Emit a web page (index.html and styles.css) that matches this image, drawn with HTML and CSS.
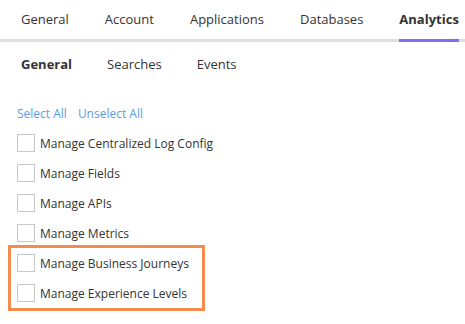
FILE: index.html
```html
<!DOCTYPE html>
<html lang="en">
<head>
  <meta charset="UTF-8">
  <title>Permissions</title>
  <link rel="stylesheet" href="styles.css">
</head>
<body>
  <!-- Top tabs -->
  <div class="tabs">
    <div class="tab">General</div>
    <div class="tab">Account</div>
    <div class="tab">Applications</div>
    <div class="tab">Databases</div>
    <div class="tab active">Analytics</div>
  </div>

  <div class="subtabs">
    <div class="subtab active">General</div>
    <div class="subtab">Searches</div>
    <div class="subtab">Events</div>
  </div>

  <div class="select-links">
    <a href="#">Select All</a>
    <a href="#">Unselect All</a>
  </div>

  <div class="perm-list">
    <label class="perm"><span class="box"></span>Manage Centralized Log Config</label>
    <label class="perm"><span class="box"></span>Manage Fields</label>
    <label class="perm"><span class="box"></span>Manage APIs</label>
    <label class="perm"><span class="box"></span>Manage Metrics</label>
    <div class="highlight">
      <label class="perm"><span class="box"></span>Manage Business Journeys</label>
      <label class="perm"><span class="box"></span>Manage Experience Levels</label>
    </div>
  </div>
</body>
</html>
```

FILE: styles.css
```css
html, body {
  margin: 0;
  padding: 0;
  background: #fff;
  overflow: hidden;
}

body {
  font-family: "Open Sans", "Liberation Sans", sans-serif;
  font-size: 12px;
  color: #333;
  width: 465px;
  height: 324px;
}

.tabs {
  display: flex;
  gap: 36px;
  padding-left: 21px;
  border-bottom: 3px solid #dcdfe3;
  height: 39px;
}

.tab {
  font-size: 13px;
  line-height: 39px;
  position: relative;
}

.tab.active {
  font-weight: bold;
}

/* purple underline sits on top of the grey rule */
.tab.active::after {
  content: "";
  position: absolute;
  left: 0;
  right: 0;
  bottom: -3px;
  height: 3px;
  background: #7b70f3;
}

.subtabs {
  display: flex;
  gap: 35px;
  padding-left: 21px;
  margin-top: 10px;
  height: 24px;
  line-height: 24px;
  font-size: 13px;
}

.subtab.active {
  font-weight: bold;
}

.select-links {
  display: flex;
  gap: 11px;
  padding-left: 17px;
  margin-top: 26px;
  height: 24px;
  line-height: 24px;
}

.select-links a {
  color: #5b9be6;
  text-decoration: none;
}

.perm-list {
  margin-top: 2px;
}

.perm {
  display: flex;
  align-items: center;
  gap: 5px;
  height: 30px;
  padding-left: 17px;
}

.box {
  width: 16px;
  height: 16px;
  border: 1px solid #c8c8c8;
  background: #fff;
}

.highlight {
  margin-left: 8px;
  width: 191px;
  border: 3px solid #f58b4c;
  margin-top: -3px;
}

.highlight .perm {
  padding-left: 6px;
}
```
